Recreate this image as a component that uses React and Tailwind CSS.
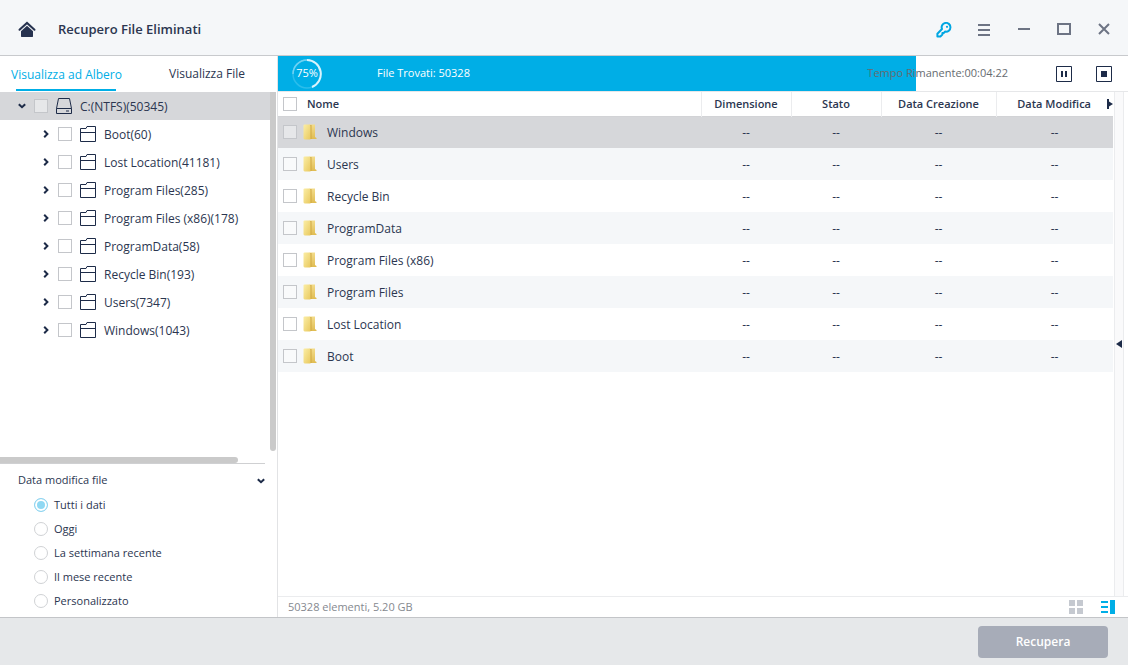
import { useState } from "react";

const folders = [
  "Boot(60)",
  "Lost Location(41181)",
  "Program Files(285)",
  "Program Files (x86)(178)",
  "ProgramData(58)",
  "Recycle Bin(193)",
  "Users(7347)",
  "Windows(1043)",
];

const files = [
  "Windows",
  "Users",
  "Recycle Bin",
  "ProgramData",
  "Program Files (x86)",
  "Program Files",
  "Lost Location",
  "Boot",
];

const periods = [
  "Tutti i dati",
  "Oggi",
  "La settimana recente",
  "Il mese recente",
  "Personalizzato",
];

function Checkbox({ label, className = "" }) {
  return (
    <input
      type="checkbox"
      aria-label={label}
      className={`block size-3.5 shrink-0 appearance-none border border-[#c4c6ca] bg-white/40 checked:bg-[#00aee6] ${className}`}
    />
  );
}

function Chevron({ open }) {
  return (
    <svg width="8" height="8" viewBox="0 0 8 8" fill="none" stroke="#1d2b48" strokeWidth="2">
      <path d={open ? "M0.8 2.2 L4 5.2 L7.2 2.2" : "M2.2 0.8 L5.4 4 L2.2 7.2"} />
    </svg>
  );
}

function DriveIcon() {
  return (
    <svg width="16" height="16" viewBox="0 0 16 16" fill="none" stroke="#1d2b48">
      <path d="M0.5 10.5 L2.5 0.5 H13.5 L15.5 10.5 V15.5 H0.5 Z M0.5 10.5 H15.5" />
      <path d="M10 13 H13" />
    </svg>
  );
}

function TreeFolder() {
  return (
    <svg width="16" height="16" viewBox="0 0 16 16" fill="none" stroke="#1d2b48">
      <path d="M0.5 15.5 V2.5 H6 L7 0.5 H15.5 V15.5 Z M0.5 6.5 H15.5" />
    </svg>
  );
}

function YellowFolder() {
  return (
    <svg width="14" height="16" viewBox="0 0 14 16">
      <defs>
        <linearGradient id="folderFront" x1="0" y1="0" x2="1" y2="1">
          <stop offset="0" stopColor="#fbeea6" />
          <stop offset="1" stopColor="#e9c95f" />
        </linearGradient>
        <linearGradient id="folderBack" x1="0" y1="0" x2="0" y2="1">
          <stop offset="0" stopColor="#f3dc8a" />
          <stop offset="1" stopColor="#e0bc52" />
        </linearGradient>
      </defs>
      <path d="M6 0.5 H12 V13 L13.5 14 V15 H6 Z" fill="url(#folderBack)" />
      <path d="M7 1 H8.5 V15 H7 Z" fill="#cfa843" />
      <path d="M0.5 1 L1.5 0.5 H6 L7.5 1.5 V15.5 H1.5 L0.5 14.5 Z" fill="url(#folderFront)" />
    </svg>
  );
}

function Header() {
  return (
    <header className="flex h-14 shrink-0 items-center border-b border-[#c8cacd] bg-[#f5f7f9] pr-4 pl-[18px] pt-1">
      <button aria-label="Home">
        <svg width="18" height="18" viewBox="0 0 18 18">
          <path d="M1.5 8.8 L9 1.9 L16.5 8.8" fill="none" stroke="#26324f" strokeWidth="2" strokeLinecap="round" />
          <path d="M9 4.8 L15 10.2 V15.5 L14.5 16 H3.5 L3 15.5 V10.2 Z" fill="#26324f" />
        </svg>
      </button>
      <h1 className="ml-[22px] flex-1 text-[13px] font-semibold text-[#2b3650]">
        Recupero File Eliminati
      </h1>
      <div className="flex items-center gap-6 text-[#6d7484]">
        <button aria-label="Registra">
          <svg width="16" height="16" viewBox="0 0 16 16" fill="none" stroke="#00a6e2" strokeWidth="2" strokeLinejoin="round">
            <path d="M6 7 A4.4 4.4 0 1 1 9.2 9.6 L7.7 11 H6.4 V12.6 L4.4 14.4 H1.4 V11.8 Z" />
            <circle cx="11" cy="4.8" r="1.1" fill="#00a6e2" stroke="none" />
          </svg>
        </button>
        <button aria-label="Menu">
          <svg width="16" height="16" viewBox="0 0 16 16" stroke="currentColor" strokeWidth="2">
            <path d="M2 3 H14 M2 8 H14 M2 13 H14" />
          </svg>
        </button>
        <button aria-label="Riduci">
          <svg width="16" height="16" viewBox="0 0 16 16" stroke="currentColor" strokeWidth="2">
            <path d="M2 7 H14" />
          </svg>
        </button>
        <button aria-label="Ingrandisci">
          <svg width="16" height="16" viewBox="0 0 16 16" fill="none" stroke="currentColor" strokeWidth="2">
            <path d="M2 2 H14 V12 H2 Z" />
          </svg>
        </button>
        <button aria-label="Chiudi">
          <svg width="16" height="16" viewBox="0 0 16 16" stroke="currentColor" strokeWidth="2">
            <path d="M3 2 L13 12 M13 2 L3 12" />
          </svg>
        </button>
      </div>
    </header>
  );
}

function Sidebar() {
  const [period, setPeriod] = useState(periods[0]);

  return (
    <aside className="flex w-[278px] shrink-0 flex-col border-r border-[#e2e3e5]">
      <div className="flex h-9 shrink-0 justify-between pr-8 pl-[11px]">
        <button className="flex flex-col items-center pb-px text-[#00aee6]">
          <span className="flex-1 pt-2 leading-[22px]">Visualizza ad Albero</span>
          <span className="h-0.5 w-[100px] bg-[#00aee6]" />
        </button>
        <button>Visualizza File</button>
      </div>

      {/* folder tree */}
      <div className="flex flex-1">
        <ul className="flex-1">
          <li className="flex h-7 items-center bg-[#d6d7da] pl-[18px]">
            <Chevron open />
            <Checkbox label="C:" className="mx-2" />
            <DriveIcon />
            <span className="ml-2 pt-0.5">C:(NTFS)(50345)</span>
          </li>
          {folders.map((name) => (
            <li key={name} className="flex h-7 items-center pl-[42px]">
              <Chevron />
              <Checkbox label={name} className="mx-2" />
              <TreeFolder />
              <span className="ml-2 pt-0.5">{name}</span>
            </li>
          ))}
        </ul>
        <div className="mr-px mb-1.5 w-1.5 rounded-b-full bg-[#cacaca]" />
      </div>
      <div className="h-1.5 w-[238px] shrink-0 rounded-r-full bg-[#cacaca]" />

      {/* date filter */}
      <fieldset className="h-[154px] shrink-0 text-[11px]">
        <div className="mr-3 flex h-[30px] items-center justify-between border-t border-[#cfd0d2] pt-1 pl-[18px]">
          <span>Data modifica file</span>
          <Chevron open />
        </div>
        {periods.map((name) => (
          <label key={name} className="flex h-6 items-center gap-1.5 pl-[34px]">
            <input
              type="radio"
              name="period"
              checked={period === name}
              onChange={() => setPeriod(name)}
              className="size-3.5 appearance-none rounded-full border border-[#d0d2d5] bg-white checked:border-[#8fd4f0] checked:bg-[#8fd8f3] checked:shadow-[inset_0_0_0_2px_white]"
            />
            {name}
          </label>
        ))}
      </fieldset>
    </aside>
  );
}

function ScanBar() {
  return (
    <div className="relative flex h-9 shrink-0 items-center border-b border-[#e6e7e9] pr-4 pl-3.5 text-[11px]">
      <div className="absolute inset-y-0 left-0 w-3/4 bg-[#00aee6]" />
      <div className="relative grid size-[30px] place-items-center text-white">
        <svg className="absolute inset-0" width="30" height="30" viewBox="0 0 30 30" fill="none">
          <circle cx="15" cy="15" r="14" stroke="#2bbdeb" strokeWidth="1.5" />
          <path d="M1 15 A14 14 0 0 1 15 1" stroke="#6fd1f2" strokeWidth="1.5" />
          <path d="M15 1 A14 14 0 0 1 20 28" stroke="#d9f3fc" strokeWidth="2" />
        </svg>
        <span className="relative">75%</span>
      </div>
      <span className="relative ml-[55px] flex-1 text-white">File Trovati: 50328</span>
      <span className="relative mr-12 text-[#666b70]">Tempo Rimanente:00:04:22</span>
      <div className="relative flex gap-6">
        <button aria-label="Pausa">
          <svg width="16" height="16" viewBox="0 0 16 16">
            <path d="M0.5 0.5 H15.5 V15.5 H0.5 Z" fill="none" stroke="#1d2b48" />
            <path d="M5 5 H7 V11 H5 Z M9 5 H11 V11 H9 Z" fill="#1d2b48" />
          </svg>
        </button>
        <button aria-label="Ferma">
          <svg width="16" height="16" viewBox="0 0 16 16">
            <path d="M0.5 0.5 H15.5 V15.5 H0.5 Z" fill="none" stroke="#1d2b48" />
            <path d="M5 5 H11 V11 H5 Z" fill="#1d2b48" />
          </svg>
        </button>
      </div>
    </div>
  );
}

function FileTable() {
  return (
    <table className="w-full table-fixed border-collapse">
      <colgroup>
        <col />
        <col className="w-[90px]" />
        <col className="w-[90px]" />
        <col className="w-[115px]" />
        <col className="w-[117px]" />
      </colgroup>
      <thead className="text-[11px]">
        <tr className="h-6 border-b border-[#d2d3d6]">
          <th className="pl-[5px] font-semibold">
            <div className="flex items-center gap-2.5">
              <Checkbox label="Seleziona tutto" />
              Nome
            </div>
          </th>
          <th className="border-l border-[#ebecee] font-semibold">Dimensione</th>
          <th className="border-l border-[#ebecee] font-semibold">Stato</th>
          <th className="border-l border-[#ebecee] font-semibold">Data Creazione</th>
          <th className="border-l border-[#ebecee] font-semibold">
            <div className="flex items-center justify-end gap-4">
              Data Modifica
              <svg width="6" height="12" viewBox="0 0 6 12" fill="#1d2b48">
                <path d="M0 1 H2 V3.5 L6 6 L2 8.5 V11 H0 Z" />
              </svg>
            </div>
          </th>
        </tr>
      </thead>
      <tbody>
        {files.map((name, i) => (
          <tr
            key={name}
            className={`h-8 text-center ${
              i === 0 ? "bg-[#d6d7da]" : i % 2 === 1 ? "bg-[#f5f7f9]" : "bg-white"
            }`}
          >
            <td className="pl-[5px]">
              <div className="flex items-center">
                <Checkbox label={name} className="mr-1.5" />
                <YellowFolder />
                <span className="ml-2.5 pt-0.5">{name}</span>
              </div>
            </td>
            <td className="pt-0.5">--</td>
            <td className="pt-0.5">--</td>
            <td className="pt-0.5">--</td>
            <td className="pt-0.5">--</td>
          </tr>
        ))}
      </tbody>
    </table>
  );
}

export default function App() {
  return (
    <div className="flex min-h-screen flex-col bg-white font-['Open_Sans',sans-serif] text-[12px] text-[#2b3650]">
      <Header />

      <div className="flex flex-1">
        <Sidebar />
        <main className="flex min-w-0 flex-1 flex-col">
          <ScanBar />
          <div className="flex flex-1">
            <div className="min-w-0 flex-1">
              <FileTable />
            </div>
            {/* collapsed preview panel */}
            <div className="mr-1 ml-px flex w-2.5 items-center justify-center border-x border-[#ebecee] bg-[#fafafb]">
              <button aria-label="Mostra anteprima">
                <svg width="6" height="8" viewBox="0 0 6 8" fill="#1d2b48">
                  <path d="M6 0 V8 L0 4 Z" />
                </svg>
              </button>
            </div>
          </div>
          <div className="flex h-[21px] shrink-0 items-center border-t border-[#ebecee] pr-3 pl-2.5 text-[11px] text-[#85898f]">
            <span className="flex-1">50328 elementi, 5.20 GB</span>
            <div className="flex gap-4">
              <button aria-label="Griglia">
                <svg width="16" height="16" viewBox="0 0 16 16" fill="#c5c9d0">
                  <path d="M1 1 H7 V7 H1 Z M9 1 H15 V7 H9 Z M1 9 H7 V15 H1 Z M9 9 H15 V15 H9 Z" />
                </svg>
              </button>
              <button aria-label="Dettagli">
                <svg width="16" height="16" viewBox="0 0 16 16" fill="#00aee6">
                  <path d="M1 2 H8 V4 H1 Z M1 7 H8 V9 H1 Z M1 12 H8 V14 H1 Z M10 1 H15 V15 H10 Z" />
                </svg>
              </button>
            </div>
          </div>
        </main>
      </div>

      <footer className="flex h-12 shrink-0 items-center justify-end border-t border-[#c3c5c8] bg-[#e6e8ea] px-5">
        <button className="h-8 w-[130px] rounded-sm bg-[#a7acb8] font-semibold text-white">
          Recupera
        </button>
      </footer>
    </div>
  );
}
